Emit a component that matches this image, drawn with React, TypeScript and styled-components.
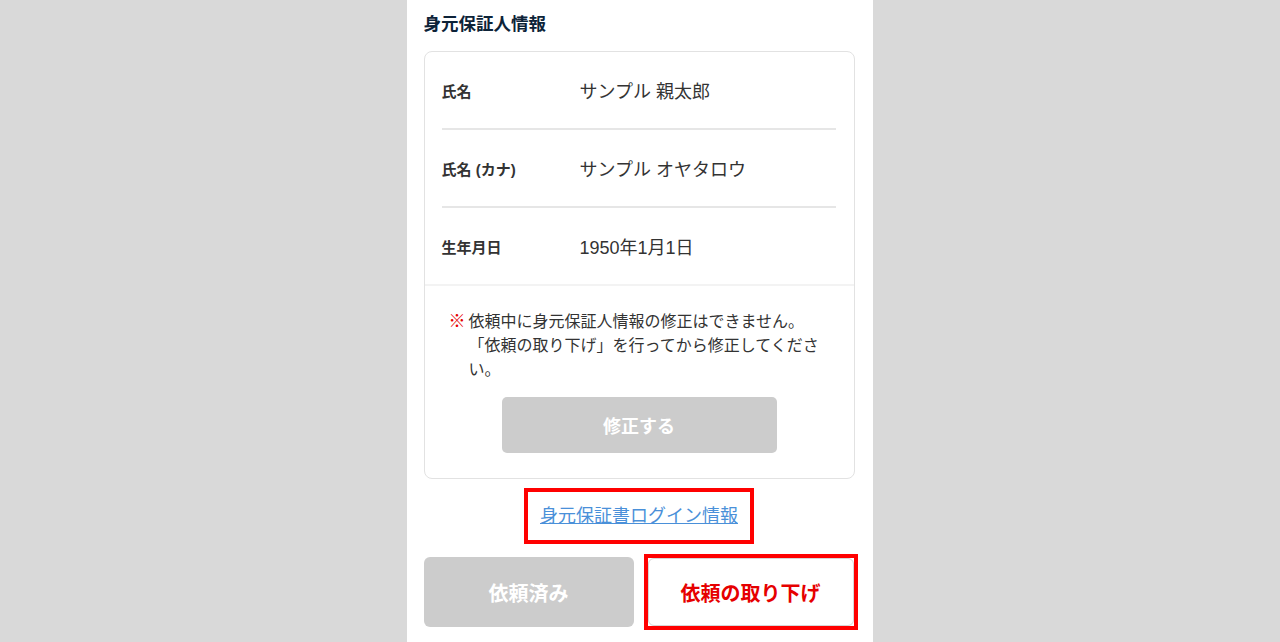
import styled, { createGlobalStyle } from 'styled-components'

const GlobalStyle = createGlobalStyle`
  html, body {
    margin: 0;
    padding: 0;
    background: #d9d9d9;
    font-family: "Liberation Sans", Arial, "Noto Sans CJK JP", sans-serif;
    color: #333;
  }
`

const Side = styled.div`
  display: flex;
  justify-content: center;
  min-height: 642px;
`

const Column = styled.main`
  width: 466px;
  background: #fff;
  padding: 13px 18px 0 17px;
  box-sizing: border-box;
  margin-left: -1px;
`

const Title = styled.h2`
  margin: 0 0 16px;
  font-size: 17.5px;
  line-height: 22px;
  font-weight: bold;
  color: #0d2338;
`

const Card = styled.section`
  border: 1px solid #e2e2e2;
  border-radius: 8px;
  background: #fff;
`

const Rows = styled.div`
  padding: 0 18px 0 17px;
`

const Row = styled.div<{ $last?: boolean }>`
  display: flex;
  align-items: center;
  height: 76px;
  border-bottom: ${({ $last }) => ($last ? 'none' : '2px solid #e6e6e6')};
`

const Label = styled.div`
  width: 138px;
  flex-shrink: 0;
  font-size: 15px;
  font-weight: bold;
  color: #333;
`

const Value = styled.div`
  font-size: 18px;
  color: #333;
`

const Notice = styled.div`
  border-top: 2px solid #f3f3f3;
  padding: 24px 24px 25px 24px;
  display: flex;
  flex-direction: column;
  align-items: center;
`

const NoticeText = styled.p`
  margin: 0;
  display: flex;
  align-self: stretch;
  font-size: 16px;
  line-height: 24px;
  color: #333;
`

const Mark = styled.span`
  color: #e60000;
  font-weight: bold;
  font-size: 17px;
  width: 20px;
  flex-shrink: 0;
`

const Button = styled.button<{ $tone: 'disabled' | 'danger' }>`
  font-family: inherit;
  font-size: 20px;
  font-weight: bold;
  border-radius: 6px;
  cursor: pointer;
  flex-shrink: 0;
  background: ${({ $tone }) => ($tone === 'disabled' ? '#cccccc' : '#fff')};
  color: ${({ $tone }) => ($tone === 'disabled' ? '#fff' : '#e60000')};
  border: ${({ $tone }) => ($tone === 'disabled' ? 'none' : '1px solid #d6d6d6')};
`

const EditButton = styled(Button)`
  margin-top: 15px;
  width: 275px;
  height: 56px;
  font-size: 18px;
  border-radius: 5px;
`

const LinkWrap = styled.div`
  display: flex;
  justify-content: center;
  margin-top: 9px;
`

const LoginLink = styled.a`
  display: block;
  border: 4px solid #ff0000;
  padding: 0 12px;
  height: 48px;
  line-height: 48px;
  font-size: 18px;
  color: #4a90d9;
  text-decoration: underline;
`

const Actions = styled.div`
  display: flex;
  align-items: center;
  gap: 10px;
  margin-top: 10px;
`

const DoneButton = styled(Button)`
  width: 210px;
  height: 70px;
`

const Highlight = styled.div`
  border: 4px solid #ff0000;
  display: flex;
  flex-shrink: 0;
`

const WithdrawButton = styled(Button)`
  width: 206px;
  height: 68px;
`

const rows = [
  { label: '氏名', value: 'サンプル 親太郎' },
  { label: '氏名 (カナ)', value: 'サンプル オヤタロウ' },
  { label: '生年月日', value: '1950年1月1日' },
]

export default function App() {
  return (
    <>
      <GlobalStyle />
      <Side>
        <Column>
          <Title>身元保証人情報</Title>
          <Card>
            <Rows>
              {rows.map((r, i) => (
                <Row key={r.label} $last={i === rows.length - 1}>
                  <Label>{r.label}</Label>
                  <Value>{r.value}</Value>
                </Row>
              ))}
            </Rows>
            <Notice>
              <NoticeText>
                <Mark>※</Mark>
                <span>
                  依頼中に身元保証人情報の修正はできません。
                  <br />
                  「依頼の取り下げ」を行ってから修正してください。
                </span>
              </NoticeText>
              <EditButton $tone="disabled">修正する</EditButton>
            </Notice>
          </Card>
          <LinkWrap>
            <LoginLink href="#">身元保証書ログイン情報</LoginLink>
          </LinkWrap>
          <Actions>
            <DoneButton $tone="disabled">依頼済み</DoneButton>
            <Highlight>
              <WithdrawButton $tone="danger">依頼の取り下げ</WithdrawButton>
            </Highlight>
          </Actions>
        </Column>
      </Side>
    </>
  )
}
